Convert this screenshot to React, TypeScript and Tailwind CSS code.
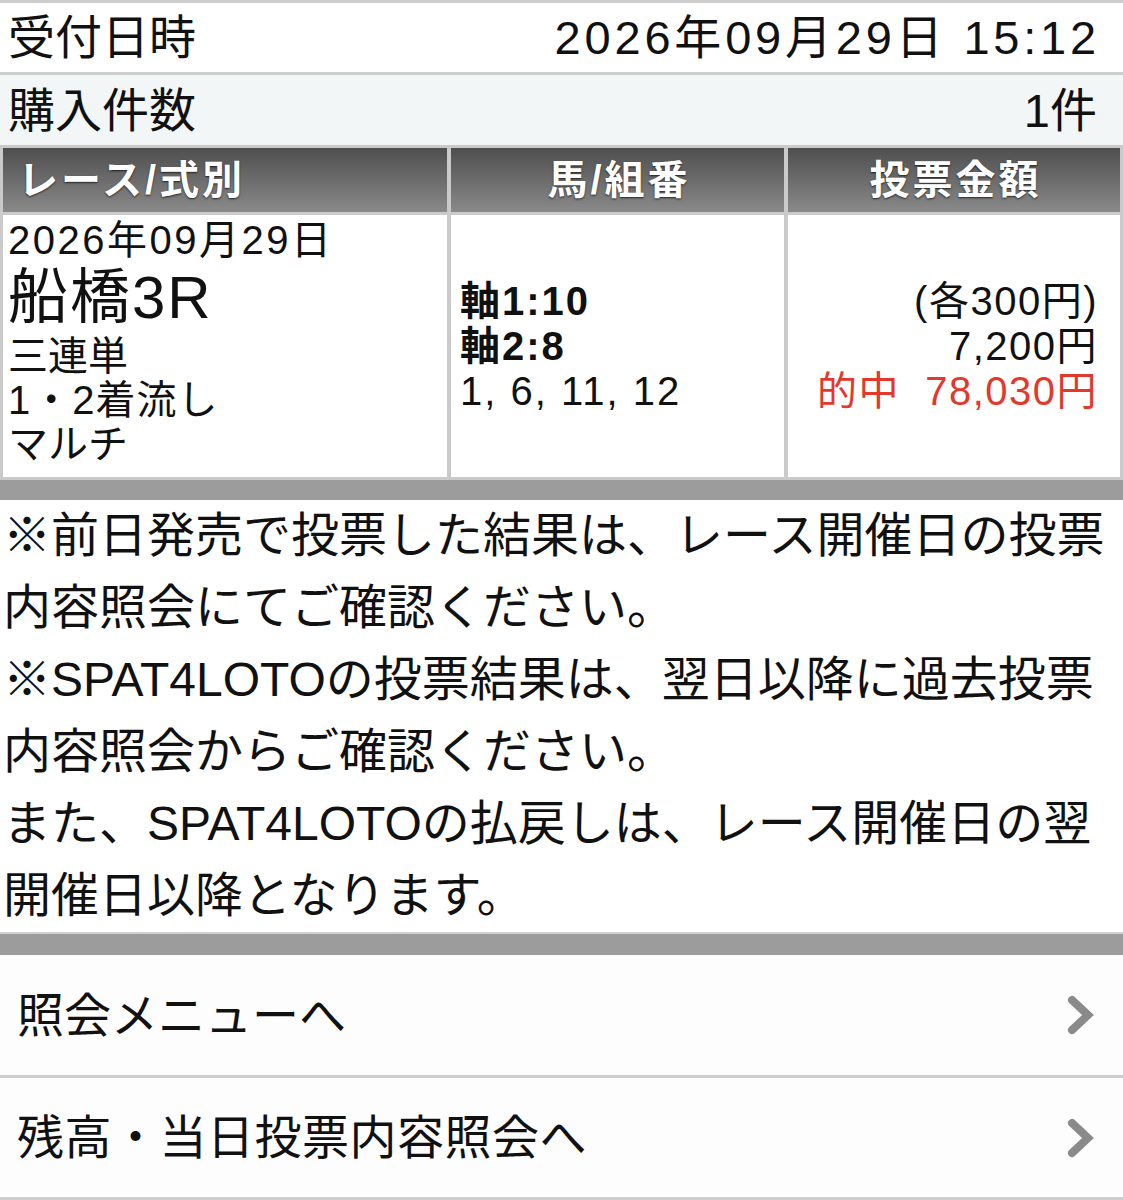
import React from "react";

const FONT = "font-['Liberation_Sans','Noto_Sans_CJK_JP',sans-serif]";

function Chevron() {
  return (
    <svg width="28" height="40" viewBox="0 0 28 40" className="shrink-0">
      <path d="M5 5 L21 20 L5 35" fill="none" stroke="#8a8a8a" strokeWidth="8" strokeLinejoin="miter" strokeLinecap="round" />
    </svg>
  );
}

const HEAD =
  "h-[64px] bg-gradient-to-b from-[#4f4f4f] to-[#8a8a8a] flex items-center text-white font-bold text-[40px] tracking-[3px] [text-shadow:0_1px_2px_rgba(0,0,0,0.7)]";

export default function App() {
  return (
    <div className={`w-[1123px] bg-white text-[#111] ${FONT}`}>
      {/* 受付日時 */}
      <div className="border-t-[3px] border-b-[3px] border-[#cdcdcd] bg-white h-[75px] flex items-center justify-between pl-[8px] pr-[23px]">
        <span className="text-[47px] leading-none">受付日時</span>
        <span className="text-[47px] leading-none tracking-[3.8px]">2026年09月29日 15:12</span>
      </div>
      {/* 購入件数 */}
      <div className="bg-[#f2f6f7] h-[70px] flex items-center justify-between pl-[8px] pr-[26px]">
        <span className="text-[47px] leading-none">購入件数</span>
        <span className="text-[47px] leading-none">1件</span>
      </div>

      {/* Table */}
      <div className="bg-[#cacaca] pt-[3px] px-[3px] pb-[3px] grid grid-cols-[444px_333px_332px] gap-x-[4px] gap-y-[3px]">
        <div className={`${HEAD} pl-[15px]`}>レース/式別</div>
        <div className={`${HEAD} justify-center pl-[3px]`}>馬/組番</div>
        <div className={`${HEAD} justify-center pl-[3px]`}>投票金額</div>

        <div className="h-[262px] bg-white pl-[5px] pt-[3px] flex flex-col">
          <span className="text-[40px] leading-[44px] tracking-[2.5px]">2026年09月29日</span>
          <span className="text-[60px] leading-[72px] tracking-[2px]">船橋3R</span>
          <span className="text-[40px] leading-[44px]">三連単</span>
          <span className="text-[40px] leading-[44px] tracking-[1px]">1・2着流し</span>
          <span className="text-[40px] leading-[44px]">マルチ</span>
        </div>
        <div className="h-[262px] bg-white pl-[9px] flex flex-col justify-center">
          <span className="text-[40px] leading-[45px] font-bold tracking-[2px]">軸1:10</span>
          <span className="text-[40px] leading-[45px] font-bold tracking-[2px]">軸2:8</span>
          <span className="text-[40px] leading-[45px] tracking-[2px]">1, 6, 11, 12</span>
        </div>
        <div className="h-[262px] bg-white pr-[22px] flex flex-col justify-center items-end">
          <span className="text-[40px] leading-[45px] tracking-[1.5px]">(各300円)</span>
          <span className="text-[40px] leading-[45px] tracking-[1.5px]">7,200円</span>
          <span className="text-[40px] leading-[45px] tracking-[1.5px] text-[#e2382d] whitespace-pre">的中  78,030円</span>
        </div>
      </div>
      <div className="h-[20px] bg-[#9c9c9c]" />

      {/* Notes */}
      <div className="px-[3px] text-[48px] leading-[72px]">
        <p className="whitespace-nowrap">※前日発売で投票した結果は、レース開催日の投票</p>
        <p className="whitespace-nowrap">内容照会にてご確認ください。</p>
        <p className="whitespace-nowrap">※SPAT4LOTOの投票結果は、翌日以降に過去投票</p>
        <p className="whitespace-nowrap">内容照会からご確認ください。</p>
        <p className="whitespace-nowrap">また、SPAT4LOTOの払戻しは、レース開催日の翌</p>
        <p className="whitespace-nowrap">開催日以降となります。</p>
      </div>

      <div className="border-t-[2px] border-[#d0d0d0] h-[23px] bg-[#9c9c9c]" />

      {/* Menu */}
      <div className="bg-[#fdfdfd] h-[123px] border-b-[3px] border-[#cdcdcd] flex items-center justify-between pl-[17px] pr-[28px]">
        <span className="text-[47px] leading-none">照会メニューへ</span>
        <Chevron />
      </div>
      <div className="bg-[#fdfdfd] h-[122px] border-b-[3px] border-[#cdcdcd] flex items-center justify-between pl-[17px] pr-[28px]">
        <span className="text-[47px] leading-none tracking-[0.5px]">残高・当日投票内容照会へ</span>
        <Chevron />
      </div>
    </div>
  );
}
